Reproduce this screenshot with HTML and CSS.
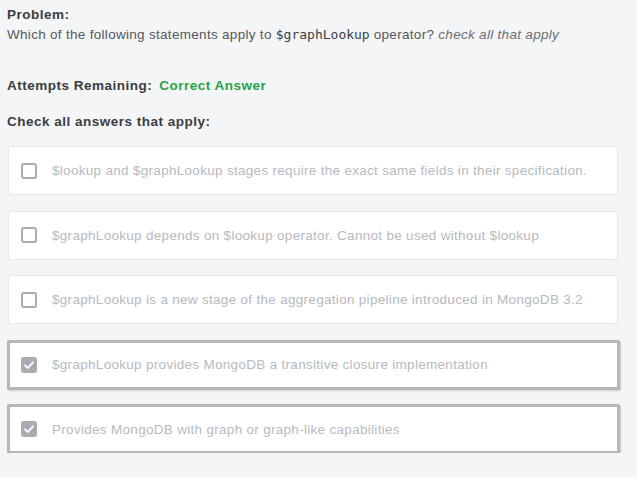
FILE: index.html
```html
<!DOCTYPE html>
<html>
<head>
<meta charset="utf-8">
<link rel="stylesheet" href="styles.css">
</head>
<body>
<div class="page">
  <div class="problem">
    <div class="label">Problem:</div>
    <div class="question">Which of the following statements apply to <code class="mono">$graphLookup</code> operator? <em>check all that apply</em></div>
  </div>
  <div class="attempts"><span class="label">Attempts Remaining:</span> <span class="correct">Correct Answer</span></div>
  <div class="label check-all">Check all answers that apply:</div>
  <div class="options">
    <div class="option">
      <span class="box"></span>
      <span class="text">$lookup and $graphLookup stages require the exact same fields in their specification.</span>
    </div>
    <div class="option">
      <span class="box"></span>
      <span class="text">$graphLookup depends on $lookup operator. Cannot be used without $lookup</span>
    </div>
    <div class="option">
      <span class="box"></span>
      <span class="text">$graphLookup is a new stage of the aggregation pipeline introduced in MongoDB 3.2</span>
    </div>
    <div class="option checked">
      <span class="box"><svg viewBox="0 0 16 16" width="16" height="16"><path d="M4 8.3 L6.8 11 L12 5.3" fill="none" stroke="#fff" stroke-width="1.8" stroke-linecap="round" stroke-linejoin="round"/></svg></span>
      <span class="text">$graphLookup provides MongoDB a transitive closure implementation</span>
    </div>
    <div class="option checked">
      <span class="box"><svg viewBox="0 0 16 16" width="16" height="16"><path d="M4 8.3 L6.8 11 L12 5.3" fill="none" stroke="#fff" stroke-width="1.8" stroke-linecap="round" stroke-linejoin="round"/></svg></span>
      <span class="text">Provides MongoDB with graph or graph-like capabilities</span>
    </div>
  </div>
</div>
</body>
</html>
```

FILE: styles.css
```css
html, body {
  margin: 0;
  padding: 0;
  background: #f4f5f7;
}
.page {
  padding: 5px 19px 0 7px;
  font-family: "Liberation Sans", Arial, sans-serif;
  font-size: 13.5px;
  letter-spacing: 0.3px;
  color: #4a4d52;
}
.label {
  font-weight: 700;
  color: #3a3d42;
  letter-spacing: 0.5px;
}
.problem {
  line-height: 20px;
}
.question {
  color: #55585d;
}
.mono {
  font-family: "DejaVu Sans Mono", monospace;
  font-size: 13px;
  letter-spacing: 0;
  color: #3a3d42;
}
.question em {
  color: #6b6e73;
}
.attempts {
  margin-top: 31px;
  line-height: 20px;
}
.correct {
  font-weight: 700;
  color: #27a249;
  margin-left: 3px;
  letter-spacing: 0.5px;
}
.check-all {
  margin-top: 16px;
  line-height: 20px;
}
.options {
  margin-top: 14px;
  display: flex;
  flex-direction: column;
  gap: 15.5px;
  padding-left: 1px;
}
.option {
  display: flex;
  align-items: center;
  gap: 15px;
  height: 47px;
  padding-left: 12px;
  background: #ffffff;
  border: 1px solid #e6e8eb;
  border-radius: 3px;
}
.option .box {
  width: 16px;
  height: 16px;
  box-sizing: border-box;
  border: 2px solid #a9acb0;
  border-radius: 3px;
  flex: none;
}
.option .text {
  color: #b7babe;
}
.option.checked {
  border: 3px solid #b3b6ba;
  margin: 0 -2px -1px -1px;
  height: 44px;
  padding-left: 11px;
  border-radius: 2px;
  box-shadow: 1px 1px 2px rgba(0,0,0,0.18);
}
.option.checked .box {
  border: none;
  background: #a9adb3;
  display: flex;
}
```
